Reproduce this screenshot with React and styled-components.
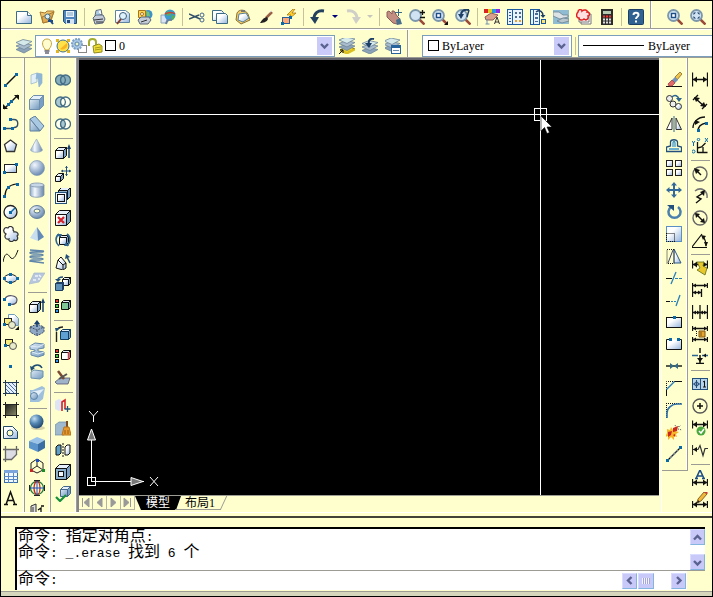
import { useState } from "react";
import styled, { createGlobalStyle } from "styled-components";

const Ln = ({ d, c = "#111", w = 1, dash }) => (
    <path d={d} fill="none" stroke={c} strokeWidth={w} strokeDasharray={dash} />
);

const Dot = ({ x, y, c = "#0a6aa8" }) => (
    <rect x={x - 1} y={y - 1} width="3" height="3" fill={c} />
);

const Cube = ({ x = 1, y = 2, s = 9, t = 4, f = "url(#pale)", c = "#111" }) => (
    <g stroke={c} strokeLinejoin="round">
        <path
            d={`M${x + 0.5} ${y + t + 0.5}l${t} ${-t}h${s}l${-t} ${t}z`}
            fill="#e6f0fa"
        />
        <path
            d={`M${x + s + 0.5} ${y + t + 0.5}l${t} ${-t}v${s}l${-t} ${t}z`}
            fill="#7a9fc4"
        />
        <rect x={x + 0.5} y={y + t + 0.5} width={s} height={s} fill={f} />
    </g>
);

const Stack = ({ x = 0, y = 0 }) => (
    <g transform={`translate(${x} ${y})`} stroke="#6f8799" strokeWidth=".8">
        <path d="M0 12l7-3 9 2-8 4.500z" fill="#8ba2b8" />
        <path d="M0 8.500l7-3 9 2-8 4.500z" fill="#a9bccd" />
        <path d="M0 5l7-3 9 2-8 4.500z" fill="#d5e8ea" />
    </g>
);

const Lens = ({ children }) => (
    <g>
        <path d="M10.500 10.500l5 5" stroke="#9c4a38" strokeWidth="2.500" />
        <circle cx="6.500" cy="6.500" r="5.500" fill="#cfe3f2" stroke="#7c97ab" strokeWidth="1.800" />
        {children}
    </g>
);

const Rings = ({ a, b, m }) => (
    <g stroke="#456d85" strokeWidth="1.300">
        <circle cx="5.500" cy="8" r="5" fill={a} />
        <circle cx="10.500" cy="8" r="5" fill={b} />
        <path d="M8 3.700a5 5 0 0 1 0 8.600a5 5 0 0 1 0-8.600z" fill={m} />
    </g>
);

const HDim = ({ y = 8, h = 8 }) => (
    <g>
        <Ln d={`M0.500 ${y + 0.5 - h / 2}v${h}M15.500 ${y + 0.5 - h / 2}v${h}M1 ${y + 0.5}h14`} w={1.3} />
        <path d={`M1 ${y + 0.5}l4-3v6zM15 ${y + 0.5}l-4-3v6z`} fill="#111" />
    </g>
);

const Sparks = () => (
    <g fill="#f7b52a">
        <path d="M1 5l3 1 1-3 2 3 3-2-1 3 4 1-3 2 1 3-3-1 0 4-3-3-3 3 0-4-3 1 2-4z" />
    </g>
);

const icons = {
    newFile: (
        <g>
            <path d="M0.500 2.500h11l4 4v8h-15z" fill="url(#pale)" stroke="#3c6c86" />
            <path d="M11.500 2.500v4h4" fill="#fff" stroke="#3c6c86" />
        </g>
    ),
    open: (
        <g>
            <path d="M1 3l5 1 2-2h7l-3 10-8 2z" fill="#efc46d" stroke="#a77b33" />
            <path d="M3 8l12-5-4 9-7 2z" fill="#e3a94f" stroke="#a77b33" />
            <circle cx="8.500" cy="7.500" r="2.500" fill="#d9edf5" stroke="#3e6c85" />
            <path d="M10 10l4 5M9 12h5" stroke="#194a8c" strokeWidth="2" />
        </g>
    ),
    save: (
        <g>
            <path d="M1.500 1.500h13v13h-11l-2-2z" fill="#4f86bd" stroke="#244e7d" />
            <rect x="4" y="2" width="8" height="6" fill="#e9f2fa" />
            <path d="M5 4h6M5 6h6" stroke="#78a0c4" />
            <rect x="4" y="10" width="8" height="5" fill="#d5e4f0" />
            <rect x="5" y="11" width="3" height="3" fill="#244e7d" />
        </g>
    ),
    print: (
        <g stroke="#59677b">
            <path d="M4 7l1-5.500 5-1 1 5z" fill="#f5f8ff" />
            <path d="M2 9l3-3h7l2 4-2 4-8 1z" fill="#c3cad8" />
            <path d="M3 11l9-1M5 13h7" stroke="#333" />
            <path d="M5 3h3M5 5h4" stroke="#6aa1c8" />
        </g>
    ),
    preview: (
        <g>
            <path d="M1.500 1.500h10l4 3v9h-14z" fill="url(#pale)" stroke="#5d83a0" />
            <circle cx="9" cy="7" r="3.500" fill="#dff2fb" stroke="#3d5f7b" />
            <path d="M7 10l-4 5" stroke="#8c3a2c" strokeWidth="2" />
        </g>
    ),
    publish: (
        <g>
            <circle cx="11" cy="5.500" r="4.500" fill="#3f91c9" />
            <path d="M9 2l3 1 1 4-3 1z" fill="#78c26b" />
            <path d="M1.500 1.500h7v7h-7z" fill="#ffd34c" stroke="#a6741e" />
            <circle cx="5" cy="5" r="1.500" fill="#fff" stroke="#a6741e" />
            <path d="M1 11l3-3h8l2 3-3 4H3z" fill="#c3cad8" stroke="#59677b" />
            <path d="M4 13l6-2" stroke="#333" />
        </g>
    ),
    globe: (
        <g>
            <path d="M1 6h7l-2 8H1z" fill="#dbe4f4" stroke="#8ea3bd" />
            <circle cx="10" cy="6" r="5.500" fill="#3a9bd1" />
            <path d="M7 2l4 1 0 3-4 1zM12 6l3 1-2 4-2-1z" fill="#5cae52" />
            <path d="M5 5c4-2 7-2 10 0" fill="none" stroke="#c43" strokeWidth="1.500" />
            <path d="M6 15c1-4 3-5 6-4" fill="none" stroke="#65809e" strokeWidth="2" />
        </g>
    ),
    cut: (
        <g>
            <Ln d="M0 5l11 5M0 10l10-4" c="#33506b" w={1.5} />
            <circle cx="13" cy="6" r="2" fill="none" stroke="#46668b" />
            <circle cx="13" cy="11" r="2" fill="none" stroke="#46668b" />
        </g>
    ),
    copyClip: (
        <g fill="url(#pale)" stroke="#3c6c86">
            <path d="M0.500 1.500h9l2 2v8h-11z" />
            <path d="M4.500 4.500h9l2 2v8h-11z" />
        </g>
    ),
    paste: (
        <g>
            <path d="M2 4c2-4 8-4 11 1l2 6-9 4-5-4z" fill="#f3cd64" stroke="#8d7136" />
            <path d="M4 5l7-1 3 5-6 4-5-2z" fill="url(#pale)" stroke="#55819b" />
            <path d="M6 1h4v2H6z" fill="#777" />
        </g>
    ),
    brush: (
        <g>
            <path d="M14 3L8 9" stroke="#986044" strokeWidth="2.500" />
            <path d="M9 8c-2 0-5 2-7 6 3 0 7-1 8-4z" fill="#222" />
            <path d="M12 3l2-1" stroke="#ddd" />
        </g>
    ),
    matchBolt: (
        <g>
            <path d="M12 0L6 6l4 0-3 5 8-7h-4l3-4z" fill="#ffcf30" stroke="#9a6b12" strokeWidth=".7" />
            <rect x="1.500" y="8.500" width="7" height="6" fill="#ffa875" stroke="#2a5c97" />
            <Dot x={1} y={14} />
            <Dot x={9} y={8} />
        </g>
    ),
    undo: (
        <g>
            <path d="M14 2C8 1 4 4 4 10" fill="none" stroke="#24405f" strokeWidth="3" />
            <path d="M0 8h9l-4 7z" fill="#24405f" />
        </g>
    ),
    redo: (
        <g>
            <path d="M2 2c6-1 10 2 10 8" fill="none" stroke="#cfcfc8" strokeWidth="3" />
            <path d="M16 8H7l4 7z" fill="#cfcfc8" />
        </g>
    ),
    pan: (
        <g>
            <path d="M1 3l2-1 3 3 0-3 2 0 3 5 3 3-3 5-4-1-6-6z" fill="#c48f83" stroke="#8a5d58" />
            <path d="M10 11l4-2 2 6-5 1z" fill="#48708d" />
            <Ln d="M12.500 0v7M9 3.500h7" c="#3b6b86" />
        </g>
    ),
    zoomRt: (
        <Lens>
            <Ln d="M13.500 1v5M11 3.500h5M11 8.500h5" w={1.3} />
        </Lens>
    ),
    zoomWin: (
        <Lens>
            <rect x="4.500" y="4.500" width="4" height="4" fill="#fff" stroke="#1f4e86" strokeWidth="1.400" />
        </Lens>
    ),
    zoomFly: (
        <Lens>
            <rect x="4.500" y="4.500" width="4" height="4" fill="#fff" stroke="#1f4e86" strokeWidth="1.400" />
            <path d="M16 12v4h-4z" fill="#111" />
        </Lens>
    ),
    zoomPrev: (
        <Lens>
            <path d="M14 1C9 0 6 2 6 6" fill="none" stroke="#1d3f66" strokeWidth="2" />
            <path d="M3 5h6l-3 5z" fill="#1d3f66" />
            <path d="M14 1l-2 7" stroke="#1d3f66" strokeWidth="1.500" />
        </Lens>
    ),
    props: (
        <g>
            <rect x="0" y="0" width="4" height="4" fill="#d22" />
            <rect x="4" y="0" width="4" height="4" fill="#e0d020" />
            <rect x="8" y="0" width="4" height="4" fill="#2a9ae0" />
            <rect x="12" y="0" width="4" height="4" fill="#8a2be2" />
            <path d="M1 8l6-4 7 2-5 5-7 0z" fill="#d9a08d" stroke="#8a5d58" />
            <path d="M3 10v5M1.500 15h4" stroke="#7090a8" />
            <path d="M10.500 15l2.500-7 2.500 7M11 13h4" fill="none" stroke="#333" />
        </g>
    ),
    designCenter: (
        <g>
            <rect x="0.500" y="0.500" width="15" height="15" fill="#e9f4ff" stroke="#1d5aa0" />
            <path d="M5.500 1v14" stroke="#1d5aa0" />
            <path d="M2 3.500h2M2 6.500h2M2 9.500h2M2 12.500h2" stroke="#1d5aa0" />
            <path d="M8 3h2v2H8zM12 3h2v2h-2zM8 7h2v2H8zM12 7h2v2h-2z" fill="#4b6c94" />
            <path d="M8 11h2v2H8zM12 11h2v2h-2z" fill="#e8a428" />
        </g>
    ),
    palettes: (
        <g>
            <rect x="0.500" y="0.500" width="9" height="15" fill="#e9f4ff" stroke="#1d5aa0" />
            <path d="M3.500 1v14" stroke="#1d5aa0" />
            <path d="M5 4h3v2H5zM5 8h3v2H5zM5 12h3v1H5z" fill="#4b6c94" />
            <path d="M6 3c4-3 7 0 7 4" fill="none" stroke="#1d3f66" strokeWidth="1.500" />
            <path d="M10.500 6h5l-2.500 3z" fill="#1d3f66" />
            <rect x="11.500" y="10.500" width="4" height="4" fill="#ffe36a" stroke="#1d5aa0" />
        </g>
    ),
    sheetSet: (
        <g>
            <path d="M0 1h16v14H0z" fill="#8fbcd2" />
            <path d="M0 3l6 0 4 3 5 0 0 2-8 2-7-3z" fill="#dbe3e6" stroke="#64798a" strokeWidth=".7" />
            <path d="M4 12l6-3 6 1v2l-7 2z" fill="#b8c7cd" stroke="#64798a" strokeWidth=".7" />
        </g>
    ),
    markup: (
        <g>
            <path d="M5 5h10v10H5z" fill="#fff" stroke="#777" />
            <path d="M3 3h10v10H3z" fill="#fff" stroke="#777" />
            <path
                d="M2 3c0-3 4-3 4-1 2-2 6-1 5 1 3 0 3 4 1 4 1 3-2 5-4 3-2 2-5 1-5-1-3 0-3-4-1-6z"
                fill="#ffe0e0"
                stroke="#e02020"
                strokeWidth="1.500"
            />
        </g>
    ),
    calc: (
        <g>
            <rect x="2" y="0" width="12" height="16" fill="#2c2c2c" />
            <rect x="4" y="2" width="8" height="3" fill="#b5c9b0" />
            <path d="M4 7.500h8" stroke="#e33" strokeWidth="2" strokeDasharray="2 1" />
            <path d="M4 10.500h8M4 13.500h8" stroke="#ddd" strokeWidth="2" strokeDasharray="2 1" />
        </g>
    ),
    help: (
        <g>
            <rect x="0.500" y="0.500" width="15" height="15" rx="1" fill="#2f6191" stroke="#1d3f66" />
            <path d="M5.500 6c0-3 5-3 5 0 0 2-2.500 1.500-2.500 4M8 11.500v2" fill="none" stroke="#fff" strokeWidth="2" />
        </g>
    ),
    zoomExt: (
        <Lens>
            <path d="M3.500 3.500h2.500l-2.500 2.500zM9.500 3.500H7l2.500 2.500zM3.500 9.500h2.500L3.500 7zM9.500 9.500H7l2.500-2.500z" fill="#1d3f66" />
        </Lens>
    ),
    layers: <Stack y={-0.5} />,
    layerCurrent: (
        <g>
            <path d="M1 12l8-4 7 3-8 4z" fill="#ecd026" stroke="#8d7a10" />
            <Stack y={-3} />
            <path d="M1 12.500l7 3 8-4" fill="none" stroke="#dcc020" strokeWidth="2" />
            <path d="M0 16l4-4M1 12h3v3" fill="none" stroke="#111" />
        </g>
    ),
    layerPrev: (
        <g>
            <Stack y={0.5} />
            <path d="M12 1C8 0 6 3 7 6" fill="none" stroke="#1d3f66" strokeWidth="2" />
            <path d="M3 5h7l-3 5z" fill="#1d3f66" />
        </g>
    ),
    layerStates: (
        <g>
            <Stack x={-1} y={-2} />
            <rect x="6.500" y="7.500" width="9" height="8" fill="#fff" stroke="#27649e" />
            <rect x="6" y="7" width="10" height="3" fill="#27649e" />
            <path d="M8 12.500h6" stroke="#68a" />
        </g>
    ),
    bulb: (
        <g>
            <path d="M6 11C2 7 3 1 8 1s6 6 2 10v1H6z" fill="#fffdd0" stroke="#c5a53a" />
            <path d="M5.500 13h5M6 15h4" stroke="#667" strokeWidth="1.500" />
        </g>
    ),
    sun: (
        <g>
            <path d="M1 1h3v3H1zM12 1h3v3h-3zM1 12h3v3H1zM12 12h3v3h-3z" fill="#e5b61c" />
            <circle cx="8" cy="8" r="6" fill="#ffe14a" stroke="#3d7290" />
            <path d="M5 11a5 5 0 0 0 7-6z" fill="#f7b522" />
        </g>
    ),
    vpFreeze: (
        <g>
            <rect x="7.500" y="7.500" width="8" height="7" fill="#fff" stroke="#888" />
            <circle cx="6" cy="6" r="5" fill="#a9c8e6" stroke="#7ba0c4" strokeWidth="2" strokeDasharray="2 1" />
            <circle cx="6" cy="6" r="2" fill="#e6f2c8" stroke="#5c86ad" />
        </g>
    ),
    lock: (
        <g>
            <path d="M2 8V4c0-4 7-4 7 0v3" fill="none" stroke="#a3ac2c" strokeWidth="2" />
            <path d="M6 8l6-2 3 2v6l-8 1z" fill="#f0de38" stroke="#8f8a1c" />
            <path d="M8 10l6-1M8 12l6-1" stroke="#a39a1c" />
        </g>
    ),

    line: (
        <g>
            <Ln d="M2 14L14 2" w={1.4} />
            <Dot x={2} y={13} />
            <Dot x={13} y={2} />
        </g>
    ),
    xline: (
        <g>
            <Ln d="M1 15L15 1" w={1.4} />
            <path d="M0 15v-5l5 5zM16 1v5l-5-5z" fill="#111" />
            <Dot x={8} y={7} />
            <Dot x={5} y={10} />
        </g>
    ),
    pline: (
        <g>
            <Ln d="M1 12.500h8M7 3.500h4c5 0 5 8 0 8" c="#31506b" w={1.4} />
            <Dot x={1} y={12} />
            <Dot x={9} y={12} />
            <Dot x={7} y={3} />
        </g>
    ),
    polygon: <path d="M7.500 2l6 4.500-2 7h-8l-2-7z" fill="url(#pale)" stroke="#333" strokeWidth="1.300" />,
    rect: (
        <g>
            <rect x="1.500" y="4.500" width="12" height="8" fill="url(#pale)" stroke="#222" />
            <Dot x={1} y={12} />
            <Dot x={13} y={4} />
        </g>
    ),
    arc: (
        <g>
            <Ln d="M2 14C2 7 6 3 13 2" w={1.2} />
            <Dot x={1} y={14} />
            <Dot x={5} y={5} />
            <Dot x={14} y={2} />
        </g>
    ),
    circle: (
        <g>
            <circle cx="7.500" cy="8" r="6.500" fill="url(#pale)" stroke="#222" strokeWidth="1.300" />
            <Ln d="M8 8l4-4" c="#0a6aa8" w={1.4} />
            <Dot x={7} y={8} />
        </g>
    ),
    revcloud: (
        <path
            d="M3 8C-1 6 1 0 5 2c2-3 6-1 5 2 1 1 1 1 1 2 4-1 5 3 3 4 2 3-1 6-3 4-2 3-6 1-5-1-4 1-5-3-3-5z"
            fill="url(#pale)"
            stroke="#333"
            strokeWidth="1.200"
        />
    ),
    spline: <Ln d="M0 14C2 3 5 6 7 9s5 2 8-7" />,
    ellipse: (
        <g>
            <ellipse cx="7.500" cy="8.500" rx="6.500" ry="4" fill="url(#pale)" stroke="#222" />
            <Dot x={1} y={8} />
            <Dot x={14} y={8} />
            <Dot x={7} y={4} />
            <Dot x={7} y={12} />
        </g>
    ),
    ellipseArc: (
        <g>
            <path d="M2 7C4 2 14 3 14 8c0 4-4 5-7 4" fill="url(#pale)" stroke="#556" strokeWidth="1.200" />
            <Dot x={1} y={7} />
            <Dot x={6} y={12} />
        </g>
    ),
    insertBlock: (
        <g>
            <path d="M5.500 0.500h6l4 4v7h-10z" fill="url(#pale)" stroke="#6f9dbc" />
            <rect x="1.500" y="4.500" width="7" height="6" fill="#f8ee80" stroke="#222" />
            <circle cx="9" cy="11" r="3.500" fill="#e8ecca" stroke="#555" />
            <Dot x={1} y={10} />
            <path d="M16 12v4h-4z" fill="#111" />
        </g>
    ),
    makeBlock: (
        <g>
            <rect x="2.500" y="3.500" width="7" height="6" fill="#f8ee80" stroke="#222" />
            <circle cx="10" cy="10" r="3.500" fill="#e8ecca" stroke="#555" />
            <Dot x={2} y={9} />
        </g>
    ),
    point: <Dot x={7} y={8} />,
    hatch: (
        <g>
            <rect x="2.500" y="2.500" width="11" height="11" fill="#e6effa" />
            <Ln d="M3 5l9 9M3 9l5 5M5 3l9 9M9 3l5 5M3 12l2 2" c="#4a74ac" />
            <Ln d="M2.500 0v16M13.500 0v16M0 2.500h16M0 13.500h16" c="#223a55" />
        </g>
    ),
    gradient: (
        <g>
            <rect x="2" y="2" width="12" height="12" fill="url(#dark)" />
            <Ln d="M2.500 0v16M13.500 0v16M0 2.500h16M0 13.500h16" c="#222" />
        </g>
    ),
    region: (
        <g>
            <path d="M0.500 2.500h9l5 5v7h-14z" fill="url(#pale)" stroke="#234a66" />
            <circle cx="7" cy="9" r="3" fill="#ffffcc" stroke="#234a66" />
        </g>
    ),
    wipeout: (
        <g>
            <path d="M3 3h11v6l-5 5H3z" fill="#dcdce4" />
            <Ln d="M2.500 0v16M13.500 0v9M0 3.500h16M0 13.500h9M14 8l-6 6" c="#666" w={1.3} />
        </g>
    ),
    table: (
        <g>
            <rect x="1.500" y="2.500" width="13" height="12" fill="#f3f8ff" stroke="#3c6ea8" />
            <rect x="1" y="2" width="14" height="3" fill="#7ca6dc" />
            <Ln d="M1 8.500h14M1 11.500h14M5.500 5v10M10.500 5v10" c="#5a8ac8" />
        </g>
    ),
    mtext: <Ln d="M3 14.500L7.500 2l4.500 12.500M4.500 10.500h6M1 14.500h4M10 14.500h4" w={1.5} />,

    polysolid: (
        <g stroke="#8fb1cc" strokeWidth=".7">
            <path d="M2 3l6-2v9l-6 2z" fill="#e3f0fa" />
            <path d="M8 1l5 1v9l-3 4-1-9-2 1z" fill="#8fb6d9" />
        </g>
    ),
    box: <Cube x={0} y={1} s={10} t={4} f="url(#steel)" c="#6f8fad" />,
    wedge: (
        <g stroke="#5f7f9d">
            <path d="M1 3l5-3 9 10-4 5z" fill="#a9c8e2" />
            <path d="M1 3v12h10z" fill="url(#steel)" />
        </g>
    ),
    cone: <path d="M7.500 1l6 11c-1 3-11 3-12 0z" fill="url(#shine)" stroke="#8fa6bd" strokeWidth=".7" />,
    sphere: <circle cx="8" cy="8" r="7.500" fill="url(#ball)" stroke="#8299b5" strokeWidth=".7" />,
    cylinder: (
        <g stroke="#7d93aa" strokeWidth=".8">
            <path d="M1 3v10c1 3 13 3 14 0V3z" fill="url(#shine)" />
            <ellipse cx="8" cy="3" rx="7" ry="2" fill="#c7d7e8" />
        </g>
    ),
    torus: (
        <g>
            <ellipse cx="8" cy="8" rx="7.500" ry="6.500" fill="url(#ball)" stroke="#67819b" />
            <ellipse cx="8" cy="7" rx="3" ry="2" fill="#ffffcc" stroke="#4f6f90" />
        </g>
    ),
    pyramid: (
        <g>
            <path d="M8 1L1 12l8 3z" fill="#c8def0" />
            <path d="M8 1l1 14 6-4z" fill="#6389b8" />
        </g>
    ),
    helix: (
        <Ln d="M1 2l13 1c3 2-13 0-13 2s13 0 13 2-13 0-13 2 13 0 13 2-13 0-13 2l14 2" c="#5f86aa" w={1.6} />
    ),
    planeSurf: (
        <g>
            <path d="M5 3l11 0-6 9-10 2z" fill="#b7c6dc" stroke="#a3b7cf" strokeWidth=".7" />
            <path d="M6 6l3 0M10 5l2 2M4 10l3 0M9 9l2 0" stroke="#eef4fb" strokeWidth="1.500" />
        </g>
    ),
    extrude: (
        <g>
            <Cube x={0} y={3} s={8} t={3} />
            <Ln d="M14 14V3" c="#173f6e" w={1.5} />
            <path d="M12 5l2-5 2 5z" fill="#173f6e" />
        </g>
    ),
    presspull: (
        <g>
            <path d="M1 7l7-3 7 3v5l-7 4-7-4z" fill="#8fa8c4" stroke="#43556a" strokeDasharray="2 1" />
            <path d="M1 7l7 3 7-3M8 10v6" fill="none" stroke="#43556a" strokeDasharray="2 1" />
            <path d="M8 7V2" stroke="#173f6e" strokeWidth="1.500" />
            <path d="M5 4l3-4 3 4z" fill="#173f6e" />
        </g>
    ),
    sweep: (
        <g stroke="#6487a8">
            <path d="M1 4l5-3 9 1v4l-6 1v2l6 1v3l-6 2-7-2v-3l4-1V8L1 7z" fill="url(#steel)" />
            <path d="M1 4l8 1 6-3M3 10l6 2 6-2" fill="none" stroke="#dcebf7" />
        </g>
    ),
    revolve: (
        <g>
            <path d="M2 8l3-2 9 1v6l-3 2-9-1z" fill="url(#steel)" stroke="#6b90b0" />
            <path d="M3 4c3-4 8-4 10 0" fill="none" stroke="#1d4c74" strokeWidth="1.500" />
            <path d="M1 2l1 5 4-3z" fill="#1d4c74" />
        </g>
    ),
    loft: (
        <g>
            <path d="M1 4h3l9-4 3 2-2 11-4 3H1z" fill="#9fc0dc" />
            <path d="M2 6l5 6 8-9z" fill="#e4eff8" />
            <circle cx="5" cy="10" r="3.500" fill="url(#steel)" stroke="#5d84a8" />
        </g>
    ),
    ball: (
        <g>
            <ellipse cx="9" cy="14" rx="7" ry="2" fill="#d9d3aa" />
            <circle cx="7.500" cy="7.500" r="7" fill="url(#deep)" />
        </g>
    ),
    solidBox: (
        <g>
            <path d="M0 5l8-4 8 3-7 4z" fill="#9cc4ea" />
            <path d="M0 5l9 3v8l-9-4z" fill="#5c94cc" />
            <path d="M9 8l7-4v8l-7 4z" fill="#3b6ea4" />
        </g>
    ),
    ucs: (
        <g>
            <path d="M8 1l6 4v7l-6 3-6-3V5zM8 8V1M8 8l6 4M8 8l-6 4" fill="none" stroke="#222" />
            <Dot x={8} y={2} c="#1b4ec0" />
            <Dot x={2} y={12} c="#c22" />
            <Dot x={14} y={12} c="#1b8c2a" />
        </g>
    ),
    orbit: (
        <g fill="none">
            <circle cx="8" cy="8" r="6.500" stroke="#1c7a3a" strokeWidth="1.300" />
            <ellipse cx="8" cy="8" rx="3" ry="6.500" stroke="#cc2222" strokeWidth="1.300" />
            <path d="M0 8h16M8 0v16" stroke="#1b4ec0" />
            <path d="M.500 5v6M15.500 5v6M5 .500h6M5 15.500h6" stroke="#222" />
        </g>
    ),
    walk: (
        <g>
            <path d="M2 4l5-2v12H2z" fill="#ddd" stroke="#333" />
            <path d="M4 5v9" stroke="#333" />
            <Ln d="M9 8l3-2v9M12 4h3" w={1.3} />
        </g>
    ),

    union: <Rings a="#86aebb" b="#86aebb" m="#86aebb" />,
    subtract: <Rings a="#a9c8d2" b="#ffffee" m="#ffffee" />,
    intersect: <Rings a="#ffffee" b="#ffffee" m="#a9c8d2" />,
    moveFace: (
        <g>
            <Cube x={0} y={7} s={5} t={3} />
            <Ln d="M11.500 0v10M6.500 5h10" c="#234f7c" />
            <path d="M10 2l1.500-2L13 2zM10 8l1.500 2L13 8zM8 3.500L6 5l2 1.500zM14 3.500L16 5l-2 1.500z" fill="#234f7c" />
        </g>
    ),
    offsetFace: (
        <g>
            <Cube x={3} y={-1} s={9} t={3} f="#8fb2c9" />
            <rect x="0.500" y="4.500" width="11" height="11" fill="#f2f8ff" stroke="#234f7c" />
            <rect x="2.500" y="6.500" width="7" height="7" fill="url(#pale)" stroke="#111" />
        </g>
    ),
    deleteFace: (
        <g>
            <Cube x={0} y={0} s={11} t={4} />
            <path d="M3 7l6 6M9 7l-6 6" stroke="#d4232b" strokeWidth="2.200" />
        </g>
    ),
    rotateFace: (
        <g>
            <Cube x={4} y={3} s={7} t={2} />
            <Ln d="M4 2C0 5 0 10 4 14M12 2c4 3 4 8 0 12" c="#2c6492" w={1.6} />
            <path d="M2 2h5L5 6zM14 14H9l2-4z" fill="#2c6492" />
        </g>
    ),
    taperFace: (
        <g>
            <path d="M1 14l2-8 3-3 5 6v5l-3 2z" fill="url(#pale)" stroke="#111" />
            <path d="M3 6l5 5v4M8 11l3-2" fill="none" stroke="#111" />
            <Ln d="M15 9l-3-6" c="#234f7c" w={1.5} />
            <path d="M10 5l1-5 4 3z" fill="#234f7c" />
        </g>
    ),
    copyFace: (
        <g>
            <Cube x={7} y={1} s={6} t={2} />
            <Cube x={0} y={6} s={7} t={1} f="#5f92b8" c="#1d3f66" />
            <Ln d="M3 4c0-2 2-3 5-3" c="#234f7c" w={1.5} />
            <path d="M0 3h6L3 6z" fill="#234f7c" />
        </g>
    ),
    colorFace: (
        <g>
            <Cube x={6} y={2} s={7} t={2} f="#7fc796" />
            <rect x="0.500" y="1.500" width="3" height="3" fill="#e33" stroke="#111" />
            <rect x="0.500" y="6.500" width="3" height="3" fill="#4c4" stroke="#111" />
            <rect x="0.500" y="11.500" width="3" height="3" fill="#39f" stroke="#111" />
        </g>
    ),
    copyEdge: (
        <g>
            <Cube x={5} y={3} s={8} t={2} f="#5fa0d2" c="#123c60" />
            <Ln d="M1.500 6v10M2 4c1-2 3-3 6-3" c="#222" w={1.4} />
            <path d="M0 2h5L1 6z" fill="#234f7c" />
        </g>
    ),
    colorEdge: (
        <g>
            <Cube x={6} y={2} s={7} t={2} f="#fff" />
            <path d="M13.500 4v8" stroke="#e33" strokeWidth="1.500" />
            <rect x="0.500" y="1.500" width="3" height="3" fill="#e33" stroke="#111" />
            <rect x="0.500" y="6.500" width="3" height="3" fill="#4c4" stroke="#111" />
            <rect x="0.500" y="11.500" width="3" height="3" fill="#39f" stroke="#111" />
        </g>
    ),
    imprint: (
        <g>
            <path d="M0 12l5-4h10l-2 6H2z" fill="#9fb4c8" stroke="#557" strokeWidth=".8" />
            <path d="M3 1l6 8" stroke="#7c4a33" strokeWidth="2.500" />
            <path d="M4 9l8-5" stroke="#555" strokeWidth="2" />
        </g>
    ),
    cleanRed: (
        <g>
            <path d="M0 3l4-2 4 2v8l-4 2-4-2z" fill="#dfe4f4" />
            <path d="M7 13V4l3-2v9" fill="none" stroke="#d4232b" strokeWidth="1.600" />
            <Ln d="M12.500 8v6M9.500 11h6" c="#234f7c" w={1.3} />
        </g>
    ),
    broom: (
        <g>
            <path d="M0 5l4-3h8v9l-3 4H0z" fill="#9fb9cf" stroke="#6b8aa6" strokeWidth=".7" />
            <path d="M12 1v7" stroke="#7a4a20" strokeWidth="2" />
            <path d="M9 7h5l2 8H7z" fill="#e7992c" stroke="#b5741e" />
            <path d="M10 10v4M13 10v4" stroke="#9a5a14" />
        </g>
    ),
    separate: (
        <g>
            <path d="M1 5l2-2h3v8l-2 2H1z" fill="#5fa0c8" stroke="#111" />
            <path d="M10 5l2-2h3v8l-2 2h-3z" fill="url(#pale)" stroke="#111" />
            <path d="M8 1v14" stroke="#111" strokeDasharray="2 1" />
        </g>
    ),
    shell: (
        <g>
            <Cube x={0} y={0} s={11} t={4} f="#8db0cc" />
            <rect x="3.500" y="7.500" width="5" height="5" fill="#eef5fb" stroke="#111" />
        </g>
    ),
    check: (
        <g>
            <Cube x={5} y={0} s={7} t={3} f="url(#steel)" c="#44678a" />
            <path d="M1 11l4 4 6-6" fill="none" stroke="#17913a" strokeWidth="2.200" />
        </g>
    ),

    erase: (
        <g>
            <path d="M0 14.500h16" stroke="#111" />
            <path d="M9 5l5-5 2 2-5 6z" fill="#f0c448" stroke="#75571c" strokeWidth=".7" />
            <path d="M6 8l3-3 3 3-3 3z" fill="#7090c0" />
            <path d="M2 12l4-4 3 3-3 3-3 0z" fill="#e0696c" stroke="#933" strokeWidth=".7" />
        </g>
    ),
    copy: (
        <g>
            <circle cx="3.500" cy="4.500" r="3" fill="#eee" stroke="#333" />
            <circle cx="7" cy="10" r="3" fill="#eee" stroke="#333" />
            <circle cx="12.500" cy="12.500" r="3" fill="url(#pale)" stroke="#333" />
            <path d="M6 3c3-3 6-1 7 2" fill="none" stroke="#2c6492" strokeWidth="1.600" />
            <path d="M10 4h6l-3 4z" fill="#2c6492" />
        </g>
    ),
    mirror: (
        <g>
            <path d="M6 2v11.500H0.500z" fill="#fff" stroke="#333" />
            <path d="M10 2v11.500h5.500z" fill="url(#pale)" stroke="#333" />
            <path d="M8 0v16" stroke="#2c6492" />
        </g>
    ),
    offset: (
        <g fill="none">
            <path d="M0.500 13.500h15V9l-4-1V4c0-3-7-3-7 0v4l-4 1z" stroke="#234f7c" strokeWidth="1.300" />
            <path d="M3 11h10M7 9V5c0-2 2-2 2 0v4" stroke="#3c97cf" strokeWidth="1.300" />
        </g>
    ),
    array: (
        <g fill="url(#pale)" stroke="#222">
            <rect x="0.500" y="0.500" width="6" height="6" />
            <rect x="9.500" y="0.500" width="6" height="6" />
            <rect x="0.500" y="9.500" width="6" height="6" />
            <rect x="9.500" y="9.500" width="6" height="6" />
        </g>
    ),
    move: (
        <g>
            <Ln d="M8 2v12M2 8h12" c="#336a9b" w={2} />
            <path d="M5 3.500L8 0l3 3.500zM5 12.500L8 16l3-3.500zM3.500 5L0 8l3.500 3zM12.500 5L16 8l-3.500 3z" fill="#336a9b" />
        </g>
    ),
    rotate: (
        <g>
            <path d="M5 3a6 6 0 1 0 7 0" fill="none" stroke="#4b7fae" strokeWidth="2.500" />
            <path d="M1 1h7v6z" fill="#24507e" />
        </g>
    ),
    scale: (
        <g>
            <rect x="0.500" y="0.500" width="15" height="15" fill="url(#pale)" stroke="#5c90c4" />
            <path d="M0.500 7.500h8v8" fill="none" stroke="#111" strokeDasharray="1 1" />
            <path d="M0.500 7v8.500H9" fill="none" stroke="#111" strokeDasharray="1 1" />
        </g>
    ),
    stretch: (
        <g>
            <path d="M8 1l7 14H8z" fill="url(#pale)" stroke="#2c5a86" />
            <path d="M1 1.500h7v14H1z" fill="none" stroke="#111" strokeDasharray="1 1" />
            <path d="M2 15L7 2" stroke="#446" />
        </g>
    ),
    trim: (
        <g>
            <Ln d="M0 8.500h6" />
            <Ln d="M9 8.500h7" dash="3 1" c="#2c80b8" />
            <Ln d="M5 14l5-12" c="#2c80b8" w={1.3} />
        </g>
    ),
    extend: (
        <g>
            <Ln d="M0 9.500h4" />
            <Ln d="M5 9.500h6" dash="2 1" c="#2c80b8" />
            <Ln d="M10 14l4-11" c="#2c80b8" w={1.3} />
        </g>
    ),
    breakAt: (
        <g>
            <rect x="0.500" y="3.500" width="15" height="10" fill="url(#pale)" stroke="#111" />
            <Dot x={8} y={3} />
        </g>
    ),
    breakGap: (
        <g>
            <path d="M3 3.500H.500v10h15v-10H13" fill="url(#pale)" stroke="#111" />
            <Dot x={4} y={3} />
            <Dot x={12} y={3} />
        </g>
    ),
    join: (
        <g>
            <Ln d="M0 8h16" w={1.4} />
            <path d="M4 5l4 3-4 3zM12 5L8 8l4 3z" fill="#316a86" />
        </g>
    ),
    chamfer: (
        <g>
            <Ln d="M0.500 16V9M8 1.500h8" />
            <Ln d="M0.500 8V1.500H7" dash="1 1" />
            <Ln d="M0.500 9.500l8-8" c="#2c80b8" w={1.4} />
        </g>
    ),
    fillet: (
        <g>
            <Ln d="M0.500 1v15M0 1.500h16" dash="1 1" />
            <Ln d="M1 16V11C1 6 6 2 11 2h5" c="#2c6ea8" w={1.6} />
        </g>
    ),
    explode: (
        <g>
            <Sparks />
            <path d="M2 8l4-1-1 4-3 2zM7 4l5-2-1 5-4 1zM7 11l2-1 0 3z" fill="#c8281e" />
            <path d="M12 2l1 1 2-2M12 5l4 1M9 1l1 2" stroke="#556" fill="none" strokeDasharray="1 1" />
        </g>
    ),
    grip: (
        <g>
            <Ln d="M2 14L14 2" w={1.2} />
            <Ln d="M4 12l8-8" c="#89a" dash="1 1" w={2} />
            <Dot x={1} y={14} />
            <Dot x={14} y={1} />
        </g>
    ),

    dimLinear: <HDim y={7} h={14} />,
    dimAligned: (
        <g>
            <Ln d="M1 6l5-5M10 15l5-5M3 4l10 9" w={1.4} />
            <path d="M2 3l6 1-4 4zM14 13l-6-1 4-4z" fill="#111" />
        </g>
    ),
    dimArc: (
        <g>
            <Ln d="M1 12C1 6 6 1 13 1M6 15c0-4 3-7 8-8" w={1.3} />
            <path d="M3 9l0-5 5 2z" fill="#111" />
            <Dot x={6} y={14} />
            <Dot x={14} y={7} />
        </g>
    ),
    dimOrd: (
        <g>
            <Ln d="M5.500 4v11M5.500 14.500h10M5.500 10l4-1 4-4M11 14V9" w={1.3} />
            <path d="M0 3l1.500 2L3 3M1.500 5v3M13 0l3 4M16 0l-3 4" stroke="#0a6aa8" fill="none" />
            <circle cx="1.500" cy="13.500" r="1.500" fill="none" stroke="#0a6aa8" />
            <circle cx="6.500" cy="1.500" r="1.200" fill="none" stroke="#0a6aa8" />
        </g>
    ),
    dimRadius: (
        <g>
            <circle cx="8" cy="8" r="7" fill="none" stroke="#666" strokeWidth="1.400" />
            <Ln d="M9 9L5 5" w={1.4} />
            <path d="M2 2l6 2-4 4z" fill="#111" />
        </g>
    ),
    dimJogged: (
        <g>
            <path d="M3 3c6-5 13 0 12 7" fill="none" stroke="#777" strokeWidth="1.500" />
            <Ln d="M4 15l5-4-4-2 6-4" w={1.4} />
            <path d="M13 2l-1 6-4-4z" fill="#111" />
        </g>
    ),
    dimDia: (
        <g>
            <circle cx="8" cy="8" r="7" fill="none" stroke="#666" strokeWidth="1.400" />
            <Ln d="M4 4l8 8" w={1.4} />
            <path d="M3 3l5 1-4 4zM13 13l-5-1 4-4z" fill="#111" />
        </g>
    ),
    dimAngular: (
        <g>
            <Ln d="M0 15.500h15M0 15L10 2M11 5c2 2 3 5 3 9" w={1.2} />
            <path d="M9 3l5 1-3 4zM12 10h4l-2 5z" fill="#111" />
        </g>
    ),
    dimQuick: (
        <g>
            <HDim y={4} h={8} />
            <path d="M5 2l7 0-1 4 4 2-2 7-8-5 3-2z" fill="#e8c72c" stroke="#5a6a14" strokeWidth=".8" />
        </g>
    ),
    dimBase: (
        <g>
            <Ln d="M0.500 1v14M15.500 1v5M9.500 7v8M1 3.500h14M1 10.500h8" w={1.3} />
            <path d="M1 3.500l3-2v4zM15 3.500l-3-2v4zM1 10.500l3-2v4zM9 10.500l-3-2v4z" fill="#111" />
        </g>
    ),
    dimCont: (
        <g>
            <Ln d="M0.500 1v14M8 1v14M15.500 1v14M1 8.500h14" w={1.3} />
            <path d="M1 8.500l3-2v4zM15 8.500l-3-2v4zM8 8.500l-3-2v4zM8 8.500l3-2v4z" fill="#111" />
        </g>
    ),
    dimSpace: (
        <g>
            <Ln d="M0.500 0v5M15.500 0v5M0.500 11v5M15.500 11v5M1 2.500h14M1 13.500h14" w={1.3} />
            <path d="M1 2.500l3-2v4zM15 2.500l-3-2v4zM1 13.500l3-2v4zM15 13.500l-3-2v4z" fill="#111" />
            <path d="M7 5h6v6H7z" fill="#e3a52e" stroke="#7d5410" />
            <path d="M9 6v4" stroke="#7d5410" />
            <path d="M4.500 5v6" stroke="#111" strokeDasharray="1 1" />
        </g>
    ),
    dimBreak: (
        <g>
            <Ln d="M8 0v5M8 7v8M4 15.500h8" w={1.5} />
            <Ln d="M0 7.500h6M10 7.500h6" c="#2c6492" w={1.3} />
            <path d="M5 10h6l-3 4zM11 7.500l3-2v4z" fill="#111" />
        </g>
    ),
    tolerance: (
        <g>
            <rect x="0.500" y="2.500" width="15" height="11" fill="#b9d4e8" stroke="#234f7c" />
            <circle cx="4.500" cy="8" r="2" fill="#fff" stroke="#234f7c" />
            <path d="M1 8h7M4.500 4v8M8.500 3v10" stroke="#234f7c" />
            <path d="M11 6l1.500-1v6M11 11h3" fill="none" stroke="#111" />
        </g>
    ),
    centerMark: (
        <g>
            <circle cx="8" cy="8" r="7" fill="none" stroke="#555" strokeWidth="1.400" />
            <path d="M8 5v6M5 8h6" stroke="#111" strokeWidth="1.500" />
        </g>
    ),
    inspect: (
        <g>
            <HDim y={4} />
            <circle cx="9" cy="11" r="4.500" fill="#4aa83e" />
            <path d="M7 11l2 2 3-4" fill="none" stroke="#fff" strokeWidth="1.500" />
        </g>
    ),
    jogLine: (
        <g>
            <Ln d="M0.500 3v10M1 7.500h5l2-4 3 10 2-7h3" c="#333" w={1.2} />
            <path d="M1 7.500l4-2.500v5z" fill="#111" />
        </g>
    ),
    dimEdit: (
        <g>
            <HDim y={12} h={7} />
            <path d="M4 8.500L8 0l4 8.500M5 6h6M3 8.500h3M10 8.500h3" fill="none" stroke="#1f4e86" strokeWidth="1.600" />
        </g>
    ),
    dimPencil: (
        <g>
            <HDim y={12} h={7} />
            <path d="M5 11l1-4 6-7 3 2-6 7z" fill="#f0b73a" stroke="#6b4a12" strokeWidth=".8" />
            <path d="M12 0l3 2 1-1-2-2z" fill="#c33" />
            <path d="M5 11l1-3 2 2z" fill="#222" />
        </g>
    ),
};

// "|" is a separator, "v" a small drop-down arrow
const standardBar = [
    "newFile", "open", "save", "|",
    "print", "preview", "publish", "globe", "|",
    "cut", "copyClip", "paste", "brush", "matchBolt", "|",
    "undo", "v", "redo", "v", "|",
    "pan", "zoomRt", "zoomFly", "zoomPrev", "|",
    "props", "designCenter", "palettes", "sheetSet", "markup", "calc", "|",
    "help",
];

const drawBar = [
    "line", "xline", "pline", "polygon", "rect", "arc", "circle", "revcloud",
    "spline", "ellipse", "ellipseArc", "insertBlock", "makeBlock", "point",
    "hatch", "gradient", "region", "wipeout", "table", "mtext",
];

const modelingBar = [
    "polysolid", "box", "wedge", "cone", "sphere", "cylinder", "torus",
    "pyramid", "helix", "planeSurf", "|",
    "extrude", "presspull", "sweep", "revolve", "loft", "|",
    "ball", "solidBox", "ucs", "orbit", "walk",
];

const solidBar = [
    "union", "subtract", "intersect", "|",
    "extrude", "moveFace", "offsetFace", "deleteFace", "rotateFace",
    "taperFace", "copyFace", "colorFace", "|",
    "copyEdge", "colorEdge", "imprint", "|",
    "cleanRed", "broom", "separate", "shell", "check",
];

const modifyBar = [
    "erase", "copy", "mirror", "offset", "array", "move", "rotate", "scale",
    "stretch", "trim", "extend", "breakAt", "breakGap", "join", "chamfer",
    "fillet", "explode", "grip",
];

const dimensionBar = [
    "dimLinear", "dimAligned", "dimArc", "dimOrd", "|",
    "dimRadius", "dimJogged", "dimDia", "dimAngular", "|",
    "dimQuick", "dimBase", "dimCont", "dimSpace", "dimBreak", "|",
    "tolerance", "centerMark", "inspect", "jogLine", "|",
    "dimEdit", "dimPencil",
];

const navArrows = [
    "M3.500 1v9M10 1L5 5.500 10 10z",
    "M9 1L4 5.500 9 10z",
    "M4 1l5 4.500L4 10z",
    "M9.500 1v9M3 1l5 4.500L3 10z",
];

const Icon = ({ name }) => (
    <Svg viewBox="0 0 16 16" aria-hidden="true">
        {icons[name]}
    </Svg>
);

function Tools({ items, vertical }) {
    return items.map((item, idx) => {
        if (item === "|") {
            return vertical ? <HSep key={idx} /> : <VSep key={idx} />;
        }
        if (item === "v") {
            return (
                <MoreButton
                    key={idx}
                    aria-label={`${items[idx - 1]} list`}
                    $off={items[idx - 1] === "redo"}
                />
            );
        }
        return (
            <ToolButton key={idx} aria-label={item} $vertical={vertical}>
                <Icon name={item} />
            </ToolButton>
        );
    });
}

const Chevron = ({ d }) => (
    <ChevronSvg viewBox="0 0 9 9" aria-hidden="true">
        <path d={d} fill="none" stroke="#5a6290" strokeWidth="2.400" />
    </ChevronSvg>
);

const DOWN = "M1 3l3.500 3.500L8 3";
const UP = "M1 6.500L4.500 3 8 6.500";
const LEFT = "M6.500 1L3 4.500 6.500 8";
const RIGHT = "M3 1l3.500 3.500L3 8";

function App() {
    const [command, setCommand] = useState("");
    const [tab, setTab] = useState("model");

    return (
        <Wrapper>
            <GlobalStyle />
            <Defs aria-hidden="true">
                <linearGradient id="pale" x1="0" y1="0" x2="1" y2="1">
                    <stop offset=".35" stopColor="#fff" />
                    <stop offset="1" stopColor="#93b3dc" />
                </linearGradient>
                <linearGradient id="steel" x1="0" y1="0" x2="1" y2="1">
                    <stop offset="0" stopColor="#e2edf6" />
                    <stop offset="1" stopColor="#6f97bd" />
                </linearGradient>
                <linearGradient id="dark" x1="0" y1="0" x2="1" y2="1">
                    <stop offset="0" stopColor="#1a1a1a" />
                    <stop offset="1" stopColor="#8f8f6c" />
                </linearGradient>
                <linearGradient id="shine">
                    <stop offset="0" stopColor="#8ea8c6" />
                    <stop offset=".35" stopColor="#f4f9ff" />
                    <stop offset="1" stopColor="#6684a8" />
                </linearGradient>
                <radialGradient id="ball" cx=".35" cy=".3" r=".7">
                    <stop offset="0" stopColor="#f2f7ff" />
                    <stop offset="1" stopColor="#6b8bb2" />
                </radialGradient>
                <radialGradient id="deep" cx=".35" cy=".3" r=".7">
                    <stop offset="0" stopColor="#c2def2" />
                    <stop offset=".5" stopColor="#5688b4" />
                    <stop offset="1" stopColor="#244c74" />
                </radialGradient>
            </Defs>

            <Row>
                <Bar>
                    <Tools items={standardBar} />
                </Bar>
                <Bar $last>
                    <Tools items={["zoomWin", "zoomExt"]} />
                </Bar>
            </Row>
            <Row $second>
                <Bar $grow>
                    <Tools items={["layers"]} />
                    <Combo $grow>
                        <Icon name="bulb" />
                        <Icon name="sun" />
                        <Icon name="vpFreeze" />
                        <Icon name="lock" />
                        <Swatch />
                        <select aria-label="Layer">
                            <option>0</option>
                        </select>
                        <ComboArrow>
                            <Chevron d={DOWN} />
                        </ComboArrow>
                    </Combo>
                    <Tools items={["layerCurrent", "layerPrev", "layerStates"]} />
                </Bar>
                <Bar $last $wide>
                    <Combo>
                        <Swatch />
                        <select aria-label="Color">
                            <option>ByLayer</option>
                        </select>
                        <ComboArrow>
                            <Chevron d={DOWN} />
                        </ComboArrow>
                    </Combo>
                    <VSep />
                    <Combo $open>
                        <Sample />
                        <select aria-label="Linetype">
                            <option>ByLayer</option>
                        </select>
                    </Combo>
                </Bar>
            </Row>

            <Work>
                <Column $narrow>
                    <Tools items={drawBar} vertical />
                </Column>
                <Column>
                    <Tools items={modelingBar} vertical />
                </Column>
                <Column>
                    <Tools items={solidBar} vertical />
                </Column>
                <Drawing>
                    <Viewport>
                        <HairX />
                        <HairY />
                        <PickBox />
                        <Pointer viewBox="0 0 12 20" aria-hidden="true">
                            <path
                                d="M1 1v15l3.500-3.500L7 18.500l2.500-1L7 12h5z"
                                fill="#fff"
                                stroke="#000"
                                strokeWidth=".6"
                            />
                        </Pointer>
                        <UcsIcon viewBox="0 0 80 80" aria-hidden="true">
                            <g fill="none" stroke="#fff">
                                <path d="M8.500 67V14M13 66.500h48" />
                                <rect x="4.500" y="62.500" width="8" height="8" />
                                <path d="M8.500 66.500h4" />
                                <path d="M8.500 14l-4 11h8zM60 66.500l-12-4v8z" fill="#777" />
                                <path d="M6-4l4.500 5L15-4M10.500 1v6M67 62l8 9M75 62l-8 9" />
                            </g>
                        </UcsIcon>
                    </Viewport>
                    <Tabs>
                        {navArrows.map((d, idx) => (
                            <NavButton key={idx} aria-label={`Tab scroll ${idx + 1}`}>
                                <svg viewBox="0 0 13 11">
                                    <path d={d} fill="#999" stroke="#999" />
                                </svg>
                            </NavButton>
                        ))}
                        <TabButton $active={tab === "model"} onClick={() => setTab("model")}>
                            模型
                        </TabButton>
                        <TabButton
                            $end
                            $active={tab === "layout"}
                            onClick={() => setTab("layout")}
                        >
                            布局1
                        </TabButton>
                    </Tabs>
                </Drawing>
                <Side>
                    <Column $short>
                        <Tools items={modifyBar} vertical />
                    </Column>
                </Side>
                <Column $plain>
                    <Tools items={dimensionBar} vertical />
                </Column>
            </Work>

            <CommandPanel>
                <CommandBox>
                    <History>
                        <HistoryText>
                            <p>
                                命令<span>: </span>指定对角点<span>:</span>
                            </p>
                            <p>
                                命令<span>: _.erase </span>找到<span> 6 </span>个
                            </p>
                        </HistoryText>
                        <ScrollTrack>
                            <ScrollButton aria-label="Scroll up">
                                <Chevron d={UP} />
                            </ScrollButton>
                            <ScrollButton aria-label="Scroll down">
                                <Chevron d={DOWN} />
                            </ScrollButton>
                        </ScrollTrack>
                    </History>
                    <Prompt>
                        <label htmlFor="command">
                            命令<span>:</span>
                        </label>
                        <input
                            id="command"
                            value={command}
                            onChange={(e) => setCommand(e.target.value)}
                        />
                        <HTrack>
                            <ScrollButton aria-label="Scroll left">
                                <Chevron d={LEFT} />
                            </ScrollButton>
                            <Thumb aria-label="Scroll thumb" />
                            <ScrollButton aria-label="Scroll right">
                                <Chevron d={RIGHT} />
                            </ScrollButton>
                        </HTrack>
                    </Prompt>
                </CommandBox>
            </CommandPanel>
            <StatusStrip />
        </Wrapper>
    );
}

const GlobalStyle = createGlobalStyle`
    * {
        box-sizing: border-box;
    }
    body {
        margin: 0;
        background: #000;
    }
    button {
        margin: 0;
        padding: 0;
        border: 0;
        background: none;
        font: inherit;
        color: inherit;
    }
    p {
        margin: 0;
    }
`;

const Wrapper = styled.main`
    display: flex;
    flex-direction: column;
    height: 100vh;
    overflow: hidden;
    border: 1px solid #000;
    background: #ffffce;
    color: #000;
    font-family: "Liberation Serif", "Noto Sans CJK SC", serif;
    font-size: 12px;
`;

const Defs = styled.svg`
    position: absolute;
    width: 0;
    height: 0;
`;

const Svg = styled.svg`
    display: block;
    flex: none;
    width: 16px;
    height: 16px;
`;

const ChevronSvg = styled.svg`
    display: block;
    width: 9px;
    height: 9px;
`;

const Row = styled.div`
    display: flex;
    flex: none;
    height: ${(p) => (p.$second ? "29px" : "28px")};
    border-top: ${(p) => (p.$second ? "1px solid #fff" : "0")};
    border-bottom: 1px solid #9c9c94;
`;

const Bar = styled.div`
    display: flex;
    align-items: center;
    flex: ${(p) => (p.$grow || (p.$last && !p.$wide) ? "1" : "none")};
    min-width: 0;
    padding: 4px ${(p) => (p.$last ? "0" : "3px")} 0 ${(p) => (p.$wide ? "13px" : "11px")};
    border-right: ${(p) => (p.$last ? "0" : "1px solid #9c9c94")};
    border-left: ${(p) => (p.$last ? "1px solid #fff" : "0")};
`;

const ToolButton = styled.button`
    display: flex;
    flex: none;
    align-items: center;
    justify-content: center;
    width: ${(p) => (p.$vertical ? "22px" : "23px")};
    height: 22px;
`;

const MoreButton = styled.button`
    flex: none;
    width: 12px;
    height: 22px;
    &::after {
        content: "";
        display: block;
        margin: 0 auto;
        width: 0;
        border: 3px solid transparent;
        border-top-color: ${(p) => (p.$off ? "#c6c6bd" : "#00007b")};
        border-bottom: 0;
    }
`;

const VSep = styled.span`
    flex: none;
    width: 6px;
    height: 18px;
    background: linear-gradient(#c6c39c, #c6c39c) center / 1px 100% no-repeat;
`;

const HSep = styled.span`
    flex: none;
    width: 19px;
    height: 6px;
    background: linear-gradient(#9c9c94, #9c9c94) center / 100% 1px no-repeat;
`;

const Combo = styled.div`
    display: flex;
    align-items: center;
    flex: ${(p) => (p.$grow ? "1" : "none")};
    width: ${(p) => (p.$open ? "134px" : "150px")};
    min-width: 0;
    height: 22px;
    padding: 0 2px 0 3px;
    border: 1px solid #7b9ebd;
    border-right-width: ${(p) => (p.$open ? "0" : "1px")};
    background: #fff;
    select {
        flex: 1;
        min-width: 0;
        height: 20px;
        padding: 0 0 0 3px;
        border: 0;
        background: none;
        appearance: none;
        color: #000;
        font: 12px "Liberation Serif", serif;
    }
`;

const Swatch = styled.span`
    flex: none;
    width: 11px;
    height: 11px;
    margin-left: 2px;
    border: 1px solid #000;
    background: #fff;
`;

const ComboArrow = styled.span`
    display: flex;
    align-items: center;
    justify-content: center;
    flex: none;
    width: 15px;
    height: 18px;
    background: #cacbf8;
`;

const Sample = styled.span`
    flex: none;
    width: 61px;
    margin: 0 1px;
    border-top: 1px solid #000;
`;

const Work = styled.div`
    display: flex;
    flex: 1;
    min-height: 0;
    margin-bottom: 3px;
    border-bottom: 1px solid #fff;
`;

const Column = styled.div`
    display: flex;
    flex-direction: column;
    align-items: center;
    flex: none;
    width: ${(p) => (p.$narrow || p.$plain ? "24px" : "26px")};
    padding-top: 11px;
    padding-right: ${(p) => (p.$narrow ? "3px" : p.$plain ? "0" : "1px")};
    padding-bottom: ${(p) => (p.$short ? "5px" : "0")};
    overflow: hidden;
    border-right: ${(p) => (p.$plain ? "0" : "1px solid #9c9c94")};
    border-bottom: ${(p) => (p.$short ? "1px solid #9c9c94" : "0")};
    box-shadow: ${(p) => (p.$plain ? "none" : "inset -1px 0 #fff")};
`;

const Side = styled.div`
    flex: none;
    margin-left: 2px;
    border-left: 1px solid #fff;
`;

const Drawing = styled.div`
    display: flex;
    flex-direction: column;
    flex: 1;
    min-width: 0;
    border-left: 2px solid #84848c;
`;

const Viewport = styled.div`
    position: relative;
    flex: 1;
    min-height: 0;
    overflow: hidden;
    border-top: 2px solid #63636b;
    background: #000;
`;

const HairX = styled.i`
    position: absolute;
    top: 54px;
    left: 0;
    right: 0;
    height: 1px;
    background: #fff;
`;

const HairY = styled.i`
    position: absolute;
    top: 0;
    bottom: 0;
    left: 461px;
    width: 1px;
    background: #fff;
`;

const PickBox = styled.i`
    position: absolute;
    top: 48px;
    left: 455px;
    width: 13px;
    height: 13px;
    border: 1px solid #fff;
`;

const Pointer = styled.svg`
    position: absolute;
    top: 55px;
    left: 461px;
    width: 12px;
    height: 20px;
`;

const UcsIcon = styled.svg`
    position: absolute;
    left: 4px;
    bottom: 0;
    width: 80px;
    height: 80px;
    overflow: visible;
`;

const Tabs = styled.div`
    display: flex;
    flex: none;
    height: 17px;
    padding-bottom: 2px;
    border-top: 1px solid #9c9c94;
`;

const NavButton = styled.button`
    width: 14px;
    border-right: 1px solid #b5b5a5;
    border-bottom: 1px solid #b5b5a5;
    svg {
        display: block;
        width: 13px;
        height: 11px;
    }
`;

const TabButton = styled.button`
    position: relative;
    width: 46px;
    padding-right: ${(p) => (p.$end ? "8px" : "0")};
    line-height: 14px;
    background: ${(p) => (p.$active ? "#000" : "none")};
    color: ${(p) => (p.$active ? "#fff" : "#000")};
    clip-path: ${(p) =>
        p.$active
            ? "polygon(0 0, 100% 0, calc(100% - 5px) 100%, 6px 100%)"
            : "none"};
    &::after {
        content: "";
        position: absolute;
        inset: 0 3px 0 -3px;
        border: 1px solid #9c9c94;
        border-width: 0 1px 1px 0;
        transform: skewX(-25deg);
        display: ${(p) => (p.$active ? "none" : "block")};
    }
`;

const CommandPanel = styled.section`
    flex: none;
    padding: 9px 7px 1px 14px;
    border-top: 2px solid #42423a;
    font-family: "Liberation Mono", "Noto Sans CJK SC", monospace;
    font-size: 16px;
    line-height: 16px;
    span {
        font-size: 13px;
        white-space: pre;
    }
`;

const CommandBox = styled.div`
    border-top: 2px solid #000;
    border-left: 2px solid #000;
    background: #fff;
`;

const History = styled.div`
    display: flex;
    justify-content: space-between;
    height: 42px;
    border-bottom: 1px solid #9c9c94;
`;

const HistoryText = styled.div`
    padding-left: 1px;
    p {
        height: 16px;
        white-space: nowrap;
    }
`;

const ScrollTrack = styled.div`
    display: flex;
    flex-direction: column;
    justify-content: space-between;
    flex: none;
    width: 15px;
`;

const ScrollButton = styled.button`
    display: flex;
    align-items: center;
    justify-content: center;
    flex: none;
    width: 15px;
    height: 16px;
    border: 1px solid #d8dcff;
    border-right-color: #84b5de;
    border-bottom-color: #84b5de;
    background: #c9c9f9;
`;

const Prompt = styled.div`
    display: flex;
    align-items: center;
    height: 19px;
    padding-left: 1px;
    input {
        flex: 1;
        min-width: 0;
        height: 16px;
        padding: 0;
        border: 0;
        outline: 0;
        background: none;
        font: 13px "Liberation Mono", "Noto Sans CJK SC", monospace;
    }
`;

const HTrack = styled.div`
    display: flex;
    align-items: center;
    align-self: stretch;
    flex: none;
    width: 86px;
    padding: 0 19px 0 3px;
    background: linear-gradient(to right, #fff 68px, #ffffce 68px);
    ${ScrollButton}:last-child {
        margin-left: auto;
    }
`;

const Thumb = styled.button`
    flex: none;
    width: 16px;
    height: 16px;
    margin-left: 1px;
    border: 1px solid #d8dcff;
    border-right-color: #84b5de;
    border-bottom-color: #84b5de;
    background:
        repeating-linear-gradient(to right, #f4f4ff 0 1px, #a5a5de 1px 2px) center / 8px 6px no-repeat,
        #c9c9f9;
`;

const StatusStrip = styled.footer`
    flex: none;
    height: 5px;
    border-top: 1px solid #9c9c94;
    background: #d6d6bd;
`;

export default App;
